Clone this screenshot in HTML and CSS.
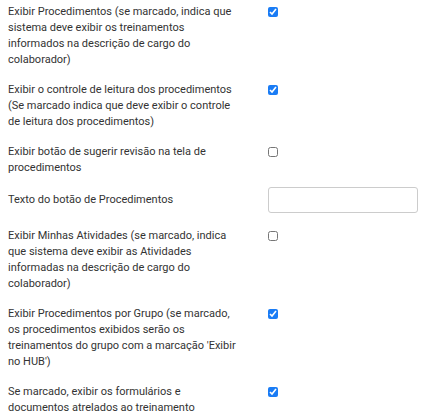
FILE: index.html
```html
<!DOCTYPE html>
<html lang="pt-BR">
<head>
    <meta charset="UTF-8" />
    <title>Configurações de Procedimentos</title>
    <link rel="stylesheet" href="styles.css">
</head>
<body>
    <div class="settings">
        <div class="row">
            <label class="label" for="exibirProc">Exibir Procedimentos (se marcado, indica que sistema deve exibir os treinamentos informados na descrição de cargo do colaborador)</label>
            <div class="field"><input type="checkbox" id="exibirProc" checked></div>
        </div>
        <div class="row">
            <label class="label" for="controleLeitura">Exibir o controle de leitura dos procedimentos (Se marcado indica que deve exibir o controle de leitura dos procedimentos)</label>
            <div class="field"><input type="checkbox" id="controleLeitura" checked></div>
        </div>
        <div class="row">
            <label class="label" for="sugerirRevisao">Exibir botão de sugerir revisão na tela de procedimentos</label>
            <div class="field"><input type="checkbox" id="sugerirRevisao"></div>
        </div>
        <div class="row row-input">
            <label class="label" for="textoBotao">Texto do botão de Procedimentos</label>
            <div class="field"><input type="text" id="textoBotao" class="text-input"></div>
        </div>
        <div class="row">
            <label class="label" for="minhasAtividades">Exibir Minhas Atividades (se marcado, indica que sistema deve exibir as Atividades informadas na descrição de cargo do colaborador)</label>
            <div class="field"><input type="checkbox" id="minhasAtividades"></div>
        </div>
        <div class="row">
            <label class="label" for="procGrupo">Exibir Procedimentos por Grupo (se marcado, os procedimentos exibidos serão os treinamentos do grupo com a marcação 'Exibir no HUB')</label>
            <div class="field"><input type="checkbox" id="procGrupo" checked></div>
        </div>
        <div class="row">
            <label class="label" for="formularios">Se marcado, exibir os formulários e documentos atrelados ao treinamento</label>
            <div class="field"><input type="checkbox" id="formularios" checked></div>
        </div>
    </div>
</body>
</html>
```

FILE: styles.css
```css
* {
    box-sizing: border-box;
    margin: 0;
    padding: 0;
}

body {
    font-family: Roboto, 'Liberation Sans', sans-serif;
    font-size: 11px;
    line-height: 16px;
    color: #333;
    background: #fff;
}

.settings {
    display: flex;
    flex-direction: column;
    gap: 14px;
    padding: 4px 0 0 8px;
}

.row {
    display: grid;
    grid-template-columns: 260px 1fr;
}

.label {
    padding-right: 27px;
}

.field {
    padding-top: 3px;
}

.field input[type="checkbox"] {
    display: block;
    width: 10px;
    height: 10px;
    accent-color: #1a7cf5;
}

.row-input {
    align-items: center;
    margin: -3px 0 1px;
}

.row-input .field {
    padding-top: 0;
}

.text-input {
    display: block;
    width: 150px;
    height: 26px;
    border: 1px solid #ccc;
    border-radius: 3px;
    outline: none;
}
```
